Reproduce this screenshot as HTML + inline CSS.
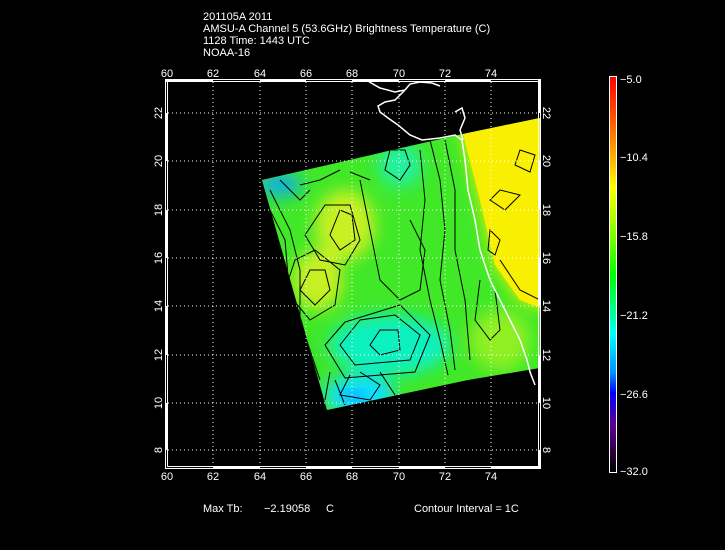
<!DOCTYPE html>
<html><head><meta charset="utf-8"><style>
html,body{margin:0;padding:0;background:#000;}
body{width:725px;height:550px;overflow:hidden;position:relative;font-family:"Liberation Sans",sans-serif;color:#fff;}
.t{position:absolute;font-size:11px;line-height:12px;white-space:pre;}
</style></head><body>
<div class="t" style="left:203px;top:11px">201105A 2011
AMSU-A Channel 5 (53.6GHz) Brightness Temperature (C)
1128 Time: 1443 UTC
NOAA-16</div>
<svg width="725" height="550" style="position:absolute;left:0;top:0" xmlns="http://www.w3.org/2000/svg">
<defs>
<filter id="b" x="-50%" y="-50%" width="200%" height="200%"><feGaussianBlur stdDeviation="8"/></filter>
<clipPath id="sw"><polygon points="262,180 458,135 540,118 540,368 468,380 327,410"/></clipPath>
<linearGradient id="cb" x1="0" y1="0" x2="0" y2="1">
<stop offset="0" stop-color="#ff0000"/><stop offset="0.12" stop-color="#ff6000"/><stop offset="0.22" stop-color="#ffc000"/><stop offset="0.28" stop-color="#ffff00"/><stop offset="0.4" stop-color="#80ff00"/><stop offset="0.5" stop-color="#00ff00"/><stop offset="0.6" stop-color="#00ffa0"/><stop offset="0.65" stop-color="#00ffff"/><stop offset="0.75" stop-color="#0090ff"/><stop offset="0.8" stop-color="#0000ff"/><stop offset="0.88" stop-color="#600090"/><stop offset="1" stop-color="#000000"/></linearGradient>
</defs>
<g clip-path="url(#sw)">
<rect x="250" y="110" width="300" height="310" fill="#40e828"/>
<g filter="url(#b)">
<ellipse cx="345" cy="225" rx="30" ry="35" fill="#c8f020"/>
<ellipse cx="318" cy="280" rx="25" ry="30" fill="#c8f020"/>
<ellipse cx="400" cy="165" rx="22" ry="22" fill="#20f0a0"/>
<ellipse cx="390" cy="345" rx="60" ry="30" fill="#10f0c0"/>
<ellipse cx="360" cy="395" rx="35" ry="20" fill="#10e0ff"/>
<ellipse cx="280" cy="185" rx="22" ry="12" fill="#10b0e0"/>
<ellipse cx="300" cy="370" rx="20" ry="30" fill="#30e020"/>
<ellipse cx="500" cy="340" rx="30" ry="30" fill="#90f020"/>
</g>
<polygon points="462,130 545,110 545,310 520,300 495,265 480,200" fill="#f8f000" />
<polygon points="462,130 545,110 545,310 520,300 495,265 480,200" fill="#f8f000" filter="url(#b)"/>
<ellipse cx="355" cy="398" rx="8" ry="5" fill="#0070ff" filter="url(#b)"/>
<g fill="none" stroke="#000" stroke-width="1">
<path d="M340,210 L330,235 340,250 355,240 352,215 Z"/>
<path d="M325,205 L305,235 320,260 345,265 360,240 350,205 Z"/>
<path d="M310,270 L300,290 315,305 330,290 325,270 Z"/>
<path d="M295,260 L285,290 310,320 335,305 340,270 315,250 Z"/>
<path d="M380,330 L370,345 380,355 400,350 398,330 Z"/>
<path d="M360,320 L340,345 355,365 410,360 420,335 395,315 Z"/>
<path d="M345,322 L325,345 345,378 415,372 430,335 400,305 Z"/>
<path d="M335,380 L345,405 M350,375 L340,395 370,400 380,385 360,372"/>
<path d="M330,372 L325,400 M380,372 L395,395"/>
<path d="M390,150 L385,170 400,180 410,165 405,150 Z"/>
<path d="M430,140 L440,180 445,230 440,280 450,330 455,370"/>
<path d="M445,140 L455,190 455,250 465,300 470,360"/>
<path d="M420,150 L425,200 420,250 430,300 440,340 448,375"/>
<path d="M270,190 L290,230 300,270 300,320 320,380"/>
<path d="M280,180 L300,200 310,190 M265,200 L285,240 290,300"/>
<path d="M360,180 L370,230 380,280 400,300 420,290 425,250 410,220"/>
<path d="M520,150 L515,165 530,172 535,155 Z"/>
<path d="M500,190 L490,200 505,210 520,195 Z"/>
<path d="M490,230 L488,250 495,255 500,240 Z"/>
<path d="M500,260 L520,290 540,300"/>
<path d="M480,280 L475,320 490,340 500,330 495,290"/>
<path d="M300,185 L320,180 340,170 M350,172 L370,180"/>
</g>
</g>
<g fill="none" stroke="#fff" stroke-width="1.5">
<path d="M366,80 L380,88 395,92 405,90 410,84 420,82 432,83 440,86 M405,90 L395,100 385,102 378,106 380,112 388,118 398,125 410,135 422,140 440,138 455,135 462,140 465,160 468,190 475,220 480,250 490,280 500,300 510,320 520,340 527,360 530,372 535,385"/>
<path d="M455,112 L462,108 465,118 460,130 463,140"/>
</g>
<g stroke="#fff" stroke-width="1" stroke-dasharray="1,3">
<line x1="213" y1="82" x2="213" y2="466"/><line x1="260" y1="82" x2="260" y2="466"/><line x1="306" y1="82" x2="306" y2="466"/><line x1="352" y1="82" x2="352" y2="466"/><line x1="399" y1="82" x2="399" y2="466"/><line x1="445" y1="82" x2="445" y2="466"/><line x1="491" y1="82" x2="491" y2="466"/>
<line x1="168" y1="113" x2="538" y2="113"/><line x1="168" y1="161" x2="538" y2="161"/><line x1="168" y1="210" x2="538" y2="210"/><line x1="168" y1="258" x2="538" y2="258"/><line x1="168" y1="306" x2="538" y2="306"/><line x1="168" y1="355" x2="538" y2="355"/><line x1="168" y1="403" x2="538" y2="403"/><line x1="168" y1="450" x2="538" y2="450"/>
</g>
<g fill="none" stroke="#fff" stroke-width="1">
<rect x="165.5" y="79.5" width="375" height="389"/>
<rect x="167.5" y="81.5" width="371" height="385"/>
</g>
<g fill="#fff">
<rect x="166" y="80" width="47" height="2"/><rect x="260" y="80" width="46" height="2"/><rect x="352" y="80" width="47" height="2"/><rect x="445" y="80" width="46" height="2"/>
<rect x="213" y="466" width="47" height="2"/><rect x="306" y="466" width="46" height="2"/><rect x="399" y="466" width="46" height="2"/><rect x="491" y="466" width="49" height="2"/>
<rect x="166" y="113" width="2" height="48"/><rect x="166" y="210" width="2" height="48"/><rect x="166" y="306" width="2" height="49"/><rect x="166" y="403" width="2" height="47"/>
<rect x="538" y="80" width="2" height="33"/><rect x="538" y="161" width="2" height="49"/><rect x="538" y="258" width="2" height="48"/><rect x="538" y="355" width="2" height="48"/><rect x="538" y="450" width="2" height="18"/>
</g>
<g fill="#fff" font-family="Liberation Sans, sans-serif" font-size="11" text-anchor="middle">
<text x="167" y="77">60</text><text x="213" y="77">62</text><text x="260" y="77">64</text><text x="306" y="77">66</text><text x="352" y="77">68</text><text x="399" y="77">70</text><text x="445" y="77">72</text><text x="491" y="77">74</text>
<text x="167" y="480">60</text><text x="213" y="480">62</text><text x="260" y="480">64</text><text x="306" y="480">66</text><text x="352" y="480">68</text><text x="399" y="480">70</text><text x="445" y="480">72</text><text x="491" y="480">74</text>
<text transform="translate(162,113) rotate(-90)">22</text><text transform="translate(162,161) rotate(-90)">20</text><text transform="translate(162,210) rotate(-90)">18</text><text transform="translate(162,258) rotate(-90)">16</text><text transform="translate(162,306) rotate(-90)">14</text><text transform="translate(162,355) rotate(-90)">12</text><text transform="translate(162,403) rotate(-90)">10</text><text transform="translate(162,450) rotate(-90)">8</text>
<text transform="translate(543,113) rotate(90)">22</text><text transform="translate(543,161) rotate(90)">20</text><text transform="translate(543,210) rotate(90)">18</text><text transform="translate(543,258) rotate(90)">16</text><text transform="translate(543,306) rotate(90)">14</text><text transform="translate(543,355) rotate(90)">12</text><text transform="translate(543,403) rotate(90)">10</text><text transform="translate(543,450) rotate(90)">8</text>
</g>
<rect x="610" y="77" width="6" height="395" fill="url(#cb)"/>
<rect x="609.5" y="76.5" width="7" height="396" fill="none" stroke="#fff" stroke-width="1"/>
<g fill="#fff" font-family="Liberation Sans, sans-serif" font-size="11">
<text x="620" y="83">−5.0</text><text x="620" y="161">−10.4</text><text x="620" y="240">−15.8</text><text x="620" y="319">−21.2</text><text x="620" y="398">−26.6</text><text x="620" y="475">−32.0</text>
<text x="203" y="512">Max Tb:</text><text x="264" y="512">−2.19058</text><text x="326" y="512">C</text><text x="414" y="512">Contour Interval = 1C</text>
</g>
</svg>
</body></html>
